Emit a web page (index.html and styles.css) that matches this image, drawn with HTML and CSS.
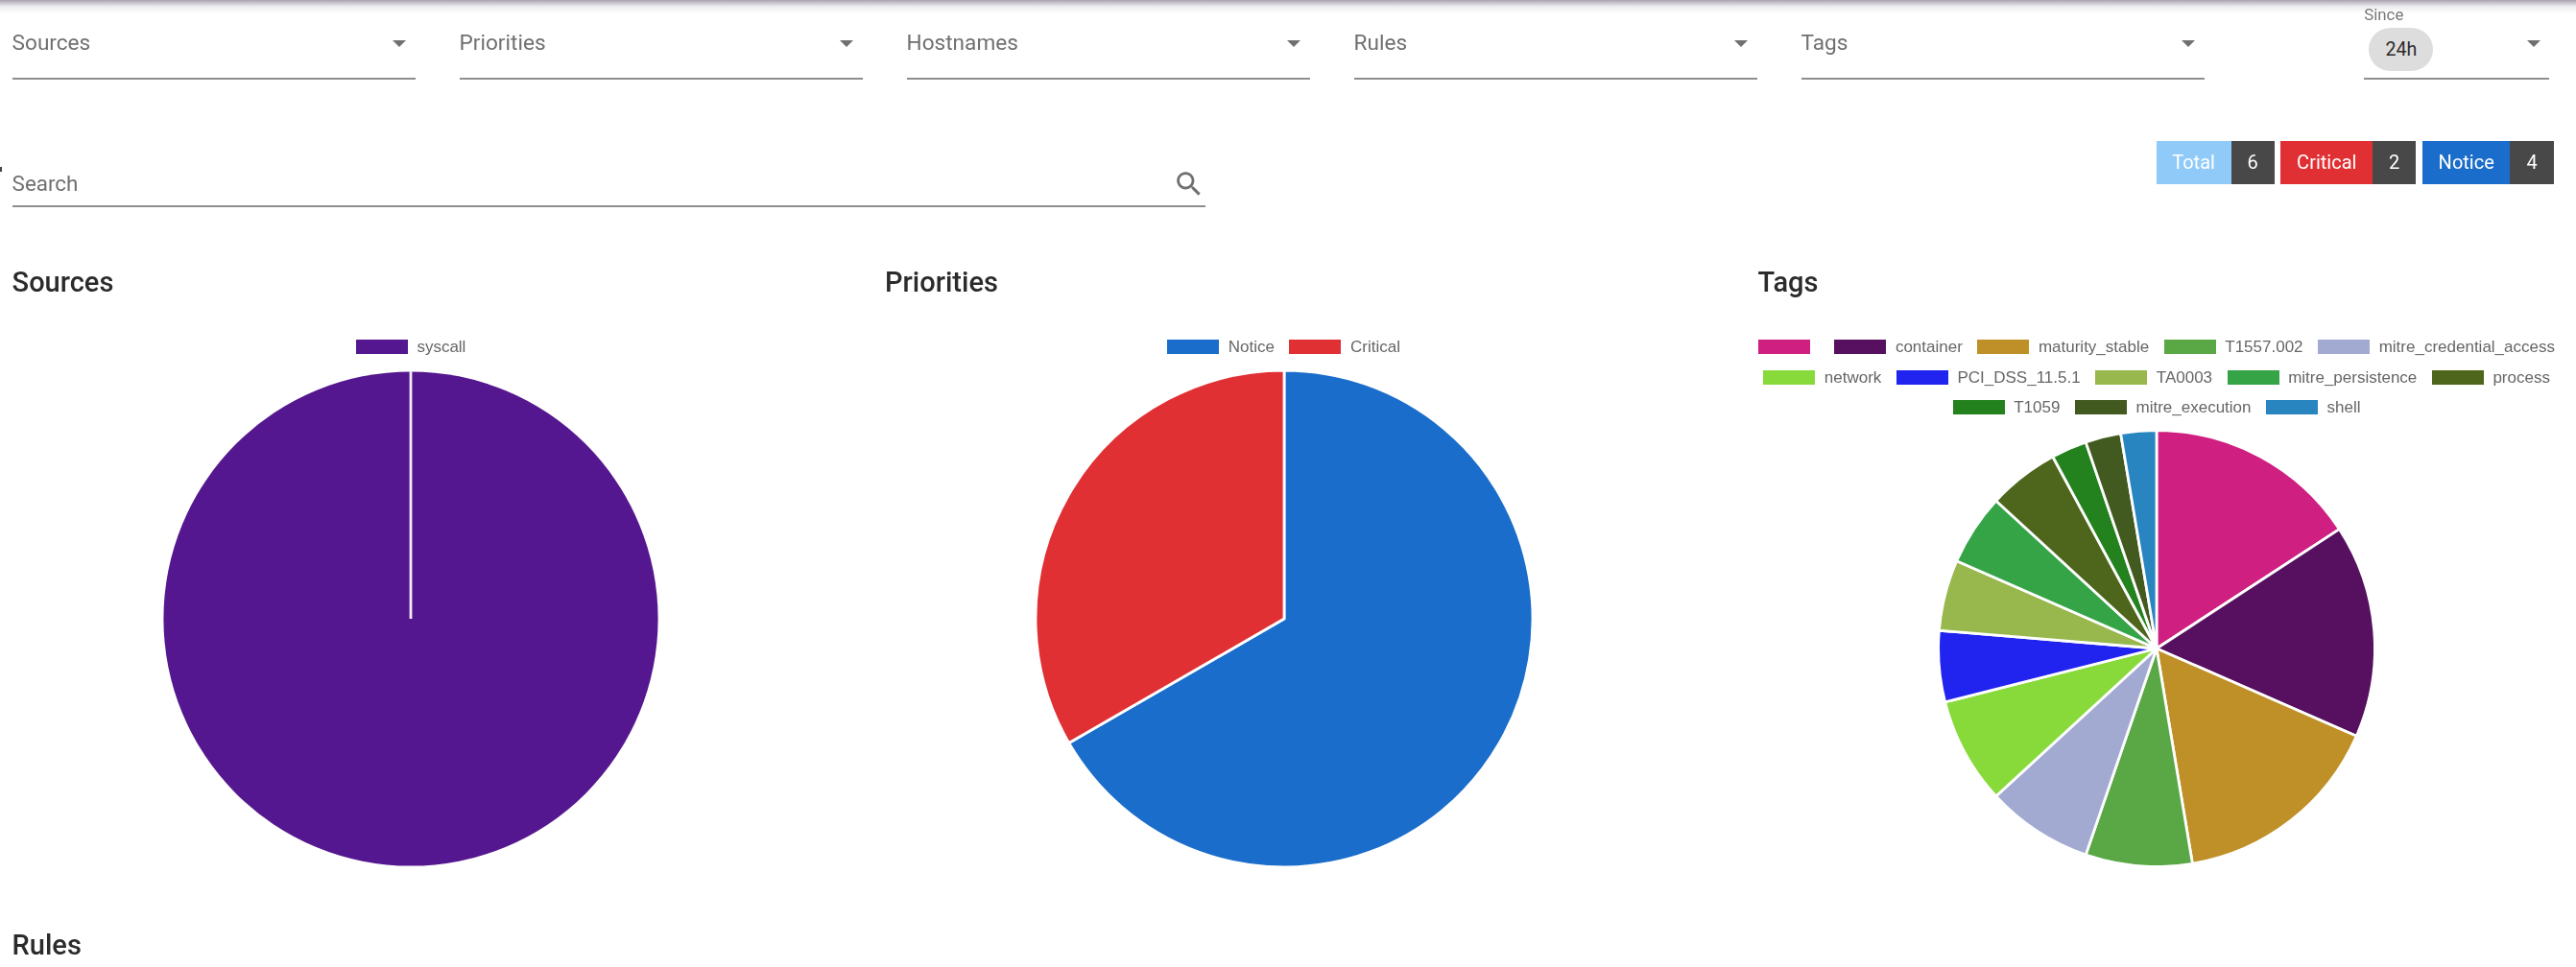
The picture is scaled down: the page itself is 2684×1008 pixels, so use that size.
FILE: index.html
```html
<!DOCTYPE html>
<html lang="en">
<head>
<meta charset="utf-8">
<title>Dashboard</title>
<link rel="stylesheet" href="styles.css">
</head>
<body>
<div class="top-shadow"></div>
<span class="edge-mark"></span>
<main class="page">
  <section class="filters">
    <div class="select"><span class="select-label">Sources</span><svg class="caret" viewBox="7 10 10 5"><path d="M7 10l5 5 5-5z"/></svg></div>
    <div class="select"><span class="select-label">Priorities</span><svg class="caret" viewBox="7 10 10 5"><path d="M7 10l5 5 5-5z"/></svg></div>
    <div class="select"><span class="select-label">Hostnames</span><svg class="caret" viewBox="7 10 10 5"><path d="M7 10l5 5 5-5z"/></svg></div>
    <div class="select"><span class="select-label">Rules</span><svg class="caret" viewBox="7 10 10 5"><path d="M7 10l5 5 5-5z"/></svg></div>
    <div class="select"><span class="select-label">Tags</span><svg class="caret" viewBox="7 10 10 5"><path d="M7 10l5 5 5-5z"/></svg></div>
    <div class="select select-since">
      <span class="float-label">Since</span>
      <span class="chip">24h</span>
      <svg class="caret" viewBox="7 10 10 5"><path d="M7 10l5 5 5-5z"/></svg>
    </div>
  </section>

  <section class="search-row">
    <div class="search">
      <span class="search-label">Search</span>
      <svg class="search-icon" viewBox="0 0 24 24"><path d="M15.5 14h-.79l-.28-.27C15.41 12.59 16 11.11 16 9.5 16 5.91 13.09 3 9.5 3S3 5.91 3 9.5 5.91 16 9.5 16c1.61 0 3.09-.59 4.23-1.57l.27.28v.79l5 4.99L20.49 19l-4.99-5zm-6 0C7.01 14 5 11.99 5 9.5S7.01 5 9.5 5 14 7.01 14 9.5 11.99 14 9.5 14z"/></svg>
    </div>
    <div class="badges">
      <div class="badge"><span class="badge-name total">Total</span><span class="badge-count">6</span></div>
      <div class="badge"><span class="badge-name critical">Critical</span><span class="badge-count">2</span></div>
      <div class="badge"><span class="badge-name notice">Notice</span><span class="badge-count">4</span></div>
    </div>
  </section>

  <section class="charts">
    <article class="chart">
      <h2 class="chart-title">Sources</h2>
      <div class="legend">
        <div class="legend-row">
          <div class="legend-item c-syscall"><i class="swatch"></i><span>syscall</span></div>
        </div>
      </div>
      <svg class="pie pie-large" viewBox="-258 -258 516 516">
        <circle class="c-syscall slice-solid" r="257.6"/>
        <line class="slice-line" x1="0" y1="-258" x2="0" y2="0"/>
      </svg>
    </article>

    <article class="chart">
      <h2 class="chart-title">Priorities</h2>
      <div class="legend">
        <div class="legend-row">
          <div class="legend-item c-notice"><i class="swatch"></i><span>Notice</span></div>
          <div class="legend-item c-critical"><i class="swatch"></i><span>Critical</span></div>
        </div>
      </div>
      <svg class="pie pie-large" viewBox="-258 -258 516 516">
        <path class="slice c-notice" d="M0 0L0 -259A259 259 0 1 1 -224.3 129.5Z"/>
        <path class="slice c-critical" d="M0 0L-224.3 129.5A259 259 0 0 1 0 -259Z"/>
      </svg>
    </article>

    <article class="chart">
      <h2 class="chart-title">Tags</h2>
      <div class="legend">
        <div class="legend-row">
          <div class="legend-item c1"><i class="swatch"></i><span></span></div>
          <div class="legend-item c2"><i class="swatch"></i><span>container</span></div>
          <div class="legend-item c3"><i class="swatch"></i><span>maturity_stable</span></div>
          <div class="legend-item c4"><i class="swatch"></i><span>T1557.002</span></div>
          <div class="legend-item c5"><i class="swatch"></i><span>mitre_credential_access</span></div>
        </div>
        <div class="legend-row">
          <div class="legend-item c6"><i class="swatch"></i><span>network</span></div>
          <div class="legend-item c7"><i class="swatch"></i><span>PCI_DSS_11.5.1</span></div>
          <div class="legend-item c8"><i class="swatch"></i><span>TA0003</span></div>
          <div class="legend-item c9"><i class="swatch"></i><span>mitre_persistence</span></div>
          <div class="legend-item c10"><i class="swatch"></i><span>process</span></div>
        </div>
        <div class="legend-row">
          <div class="legend-item c11"><i class="swatch"></i><span>T1059</span></div>
          <div class="legend-item c12"><i class="swatch"></i><span>mitre_execution</span></div>
          <div class="legend-item c13"><i class="swatch"></i><span>shell</span></div>
        </div>
      </div>
      <svg class="pie pie-small" viewBox="-226 -226 452 452">
        <path class="slice c1" d="M0 0L0 -227.4A227.4 227.4 0 0 1 190.4 -124.4Z"/>
        <path class="slice c2" d="M0 0L190.4 -124.4A227.4 227.4 0 0 1 208.3 91.3Z"/>
        <path class="slice c3" d="M0 0L208.3 91.3A227.4 227.4 0 0 1 37.4 224.3Z"/>
        <path class="slice c4" d="M0 0L37.4 224.3A227.4 227.4 0 0 1 -73.8 215.1Z"/>
        <path class="slice c5" d="M0 0L-73.8 215.1A227.4 227.4 0 0 1 -167.3 154Z"/>
        <path class="slice c6" d="M0 0L-167.3 154A227.4 227.4 0 0 1 -220.4 55.8Z"/>
        <path class="slice c7" d="M0 0L-220.4 55.8A227.4 227.4 0 0 1 -226.6 -18.8Z"/>
        <path class="slice c8" d="M0 0L-226.6 -18.8A227.4 227.4 0 0 1 -208.3 -91.3Z"/>
        <path class="slice c9" d="M0 0L-208.3 -91.3A227.4 227.4 0 0 1 -167.3 -154Z"/>
        <path class="slice c10" d="M0 0L-167.3 -154A227.4 227.4 0 0 1 -108.2 -200Z"/>
        <path class="slice c11" d="M0 0L-108.2 -200A227.4 227.4 0 0 1 -73.8 -215.1Z"/>
        <path class="slice c12" d="M0 0L-73.8 -215.1A227.4 227.4 0 0 1 -37.4 -224.3Z"/>
        <path class="slice c13" d="M0 0L-37.4 -224.3A227.4 227.4 0 0 1 0 -227.4Z"/>
      </svg>
    </article>
  </section>

  <h2 class="chart-title rules-title">Rules</h2>
</main>
</body>
</html>
```

FILE: styles.css
```css
* { box-sizing: border-box; }
html, body { margin: 0; height: 100%; background: #fff; overflow: hidden; }
body { font-family: Roboto, "Liberation Sans", sans-serif; color: #222; }

.top-shadow {
  position: absolute; top: 0; left: 0; right: 0; height: 15px;
  background: linear-gradient(to bottom, #a8a2ae 0, #c9c6cd 3px, #eeedf0 7px, #fff 14px);
}
.edge-mark {
  position: absolute; left: 0; top: 174px; width: 2px; height: 5px; background: #444;
}

.page { padding-left: 12.6px; filter: blur(0.45px); }

.filters { display: flex; gap: 45.6px; padding-top: 14px; }
.select {
  position: relative; width: 420.4px; height: 69px; flex: none;
  border-bottom: 2px solid #8e8e8e;
  display: flex; justify-content: space-between; align-items: flex-start;
}
.select-label { font-size: 22.6px; line-height: 61px; color: #707070; }
.caret { width: 14px; height: 7px; fill: #707070; margin: 28px 9.5px 0 0; flex: none; }

.select-since { width: 193px; margin-left: 120.8px; }
.float-label {
  position: absolute; left: 0; top: -11px; font-size: 16.8px; line-height: 24px; color: #777;
}
.chip {
  width: 67px; height: 45px; margin: 15px 0 0 5px; border-radius: 22.4px;
  background: #dedddd; color: #2c2c2c; font-size: 19.6px; line-height: 45px; text-align: center;
}

.search-row { display: flex; justify-content: space-between; align-items: flex-start; margin-top: 64px; padding-right: 23.3px; }
.search {
  width: 1243.4px; height: 69px; border-bottom: 2px solid #8e8e8e;
  display: flex; justify-content: space-between; align-items: flex-start;
}
.search-label { font-size: 22.4px; line-height: 32px; margin-top: 28px; color: #707070; }
.search-icon { width: 33.6px; height: 33.6px; fill: #707070; margin: 28px 0 0; }

.badges { display: flex; gap: 6.6px; }
.badge { display: flex; height: 45px; font-size: 20px; line-height: 45px; color: #fff; }
.badge-name { padding: 0 16.7px; }
.badge-count { padding: 0 17px; background: #484848; }
.total { background: #90caf9; }
.critical { background: #e03034; }
.notice { background: #1a6dca; }

.charts { display: grid; grid-template-columns: repeat(3, 831px); column-gap: 78.5px; margin-top: 58px; }
.chart { display: flex; flex-direction: column; align-items: center; }
.chart-title { align-self: flex-start; margin: 0; font-size: 29px; line-height: 40px; font-weight: 500; color: #2b2b2b; }

.legend { display: flex; flex-direction: column; align-items: center; gap: 16.6px; margin-top: 40px; width: 100%; }
.legend-row { display: flex; justify-content: center; gap: 15.5px; height: 15px; white-space: nowrap; }
.legend-item { display: flex; align-items: center; gap: 9.6px; font-family: "Liberation Sans", Arial, sans-serif; font-size: 17px; line-height: 15px; color: #666; }
.swatch { display: block; width: 54px; height: 15px; background: var(--c); }

.pie { display: block; margin-top: 18px; flex: none; }
.pie-large { width: 516px; height: 516px; }
.pie-small { width: 452px; height: 452px; }
.slice { fill: var(--c); stroke: #fff; stroke-width: 2.8; stroke-linejoin: round; }
.slice-solid { fill: var(--c); }
.slice-line { stroke: #f4eef8; stroke-width: 2.8; }

.rules-title { margin-top: 62px; }

.c-syscall { --c: #55178f; }
.c-notice { --c: #1a6dca; }
.c-critical { --c: #e03034; }
.c1 { --c: #cf1f80; }
.c2 { --c: #56105f; }
.c3 { --c: #bf9027; }
.c4 { --c: #5aa845; }
.c5 { --c: #a2aad2; }
.c6 { --c: #88da3a; }
.c7 { --c: #2124ee; }
.c8 { --c: #98b84d; }
.c9 { --c: #35a447; }
.c10 { --c: #4e661c; }
.c11 { --c: #23821d; }
.c12 { --c: #42591f; }
.c13 { --c: #2885c0; }
```
